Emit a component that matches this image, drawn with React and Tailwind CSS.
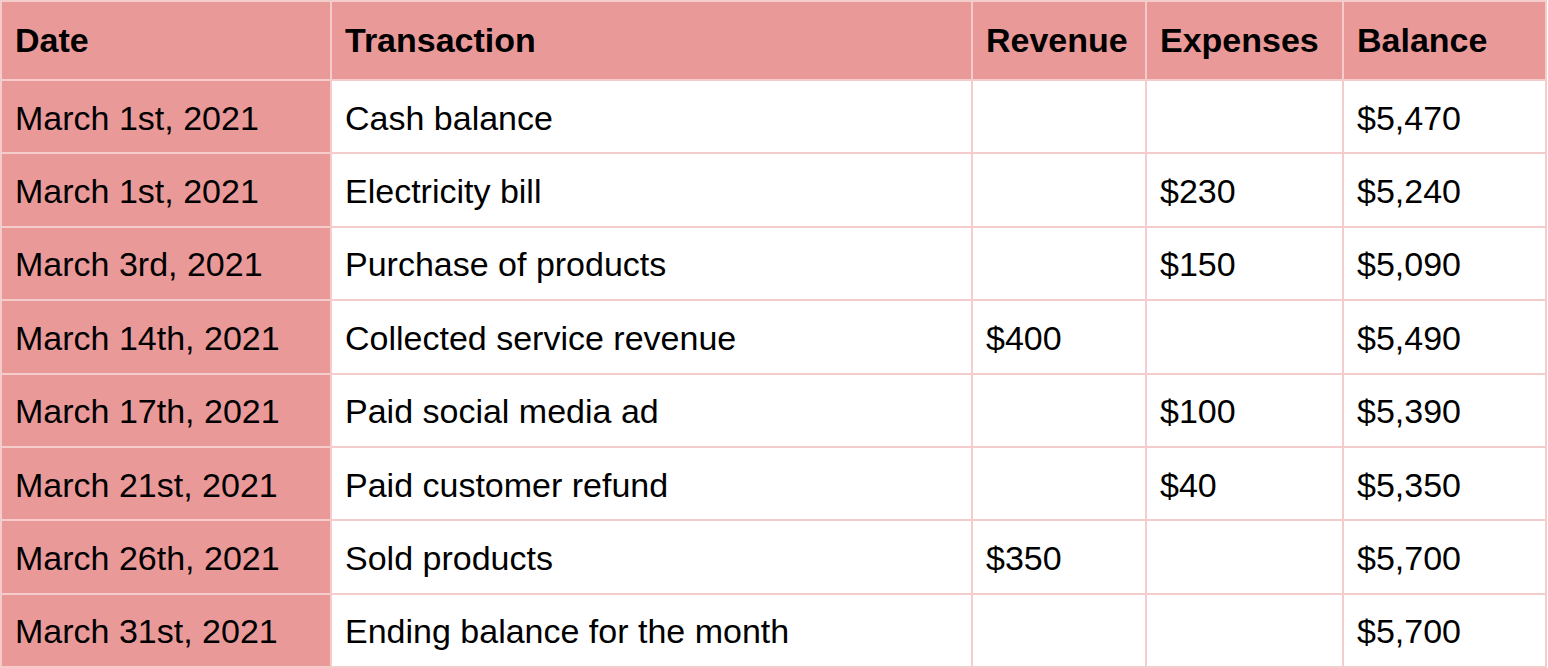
import React from 'react';

const rows = [
  { date: 'March 1st, 2021', tx: 'Cash balance', rev: '', exp: '', bal: '$5,470' },
  { date: 'March 1st, 2021', tx: 'Electricity bill', rev: '', exp: '$230', bal: '$5,240' },
  { date: 'March 3rd, 2021', tx: 'Purchase of products', rev: '', exp: '$150', bal: '$5,090' },
  { date: 'March 14th, 2021', tx: 'Collected service revenue', rev: '$400', exp: '', bal: '$5,490' },
  { date: 'March 17th, 2021', tx: 'Paid social media ad', rev: '', exp: '$100', bal: '$5,390' },
  { date: 'March 21st, 2021', tx: 'Paid customer refund', rev: '', exp: '$40', bal: '$5,350' },
  { date: 'March 26th, 2021', tx: 'Sold products', rev: '$350', exp: '', bal: '$5,700' },
  { date: 'March 31st, 2021', tx: 'Ending balance for the month', rev: '', exp: '', bal: '$5,700' },
];

const headers = ['Date', 'Transaction', 'Revenue', 'Expenses', 'Balance'];

function Cell({ children, pink, bold }) {
  return (
    <div
      className={`flex items-center pl-[13px] whitespace-nowrap overflow-hidden ${pink ? 'bg-[#ea9999]' : 'bg-white'} ${bold ? 'font-bold pb-[2px]' : 'font-normal pt-[2px]'}`}
    >
      {children}
    </div>
  );
}

export default function App() {
  return (
    <div className="bg-white w-[1548px] h-[668px]">
      <div
        className="grid w-[1547px] h-[668px] bg-[#f4cccc] p-[2px] gap-[2px] grid-cols-[328px_639px_172px_195px_201px] grid-rows-[77px_repeat(8,1fr)] text-black text-[34px] leading-none"
        style={{ fontFamily: '"Liberation Sans", Arial, sans-serif' }}
      >
        {/* Header */}
        {headers.map((h) => (
          <Cell key={h} pink bold>{h}</Cell>
        ))}

        {/* Body */}
        {rows.map((r, i) => (
          <React.Fragment key={i}>
            <Cell pink>{r.date}</Cell>
            <Cell>{r.tx}</Cell>
            <Cell>{r.rev}</Cell>
            <Cell>{r.exp}</Cell>
            <Cell>{r.bal}</Cell>
          </React.Fragment>
        ))}
      </div>
    </div>
  );
}
